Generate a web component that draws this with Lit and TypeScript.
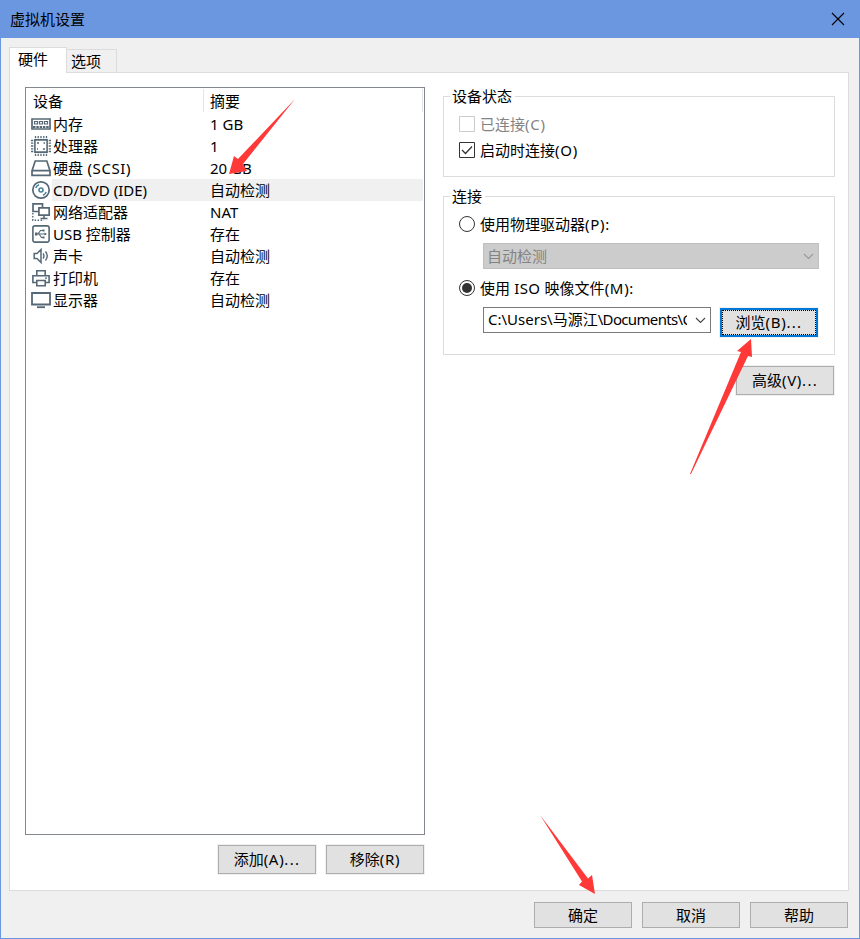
import { LitElement, html, svg, css } from "lit";
import { customElement, property } from "lit/decorators.js";
import { classMap } from "lit/directives/class-map.js";

const icons: Record<string, unknown> = {
  memory: svg`<path d="M2 6h18v10H2z" stroke-width="1.700"/><path d="M4.500 8.500h3v2.500h-3zM9.500 8.500h3v2.500h-3zM14.500 8.500h3v2.500h-3z" stroke-width="1.200"/><path d="M3 14h16" stroke-width="1.800" stroke-dasharray="2.500 .8"/>`,
  cpu: svg`<path d="M4.900 4.900h12.200v12.200H4.900z" stroke-width="1.600"/><path d="M5.500 1v2.300M8.200 1v2.300M11 1v2.300M13.800 1v2.300M16.500 1v2.300M5.500 18.700V21M8.200 18.700V21M11 18.700V21M13.800 18.700V21M16.500 18.700V21M1 5.500h2.300M1 8.200h2.300M1 11h2.300M1 13.800h2.300M1 16.500h2.300M18.700 5.500H21M18.700 8.200H21M18.700 11H21M18.700 13.800H21M18.700 16.500H21" stroke-width="1.300"/><path d="M7 8h2M13 14h2M13.500 8h1.500M7 14h1" stroke-width="1.600"/>`,
  disk: svg`<path d="M2 13.800 5.200 4h11.600L20 13.800v4.500H2zM2 13.700h18" stroke-width="1.700"/>`,
  cd: svg`<circle cx="11" cy="11" r="8.200" stroke-width="1.700"/><circle class="blue" cx="11" cy="11" r="2"/><path class="blue" d="M5.800 9q.8-2.300 3.200-3.200M16.200 13q-.8 2.300-3.200 3.200" stroke-width="1.500"/>`,
  net: svg`<path d="M3 2.900h9.500v7.600H3z" stroke-width="1.700"/><path class="paper" d="M8.900 6.900h10.300v7.300H8.900z" stroke-width="1.700"/><path d="M14 14.500v3M10.500 17.500h7" stroke-width="1.600"/><path d="M2.800 12v7.200h11" stroke-width="1.400" stroke-dasharray="1.500 1.500"/>`,
  usb: svg`<rect x="2.900" y="2.900" width="16.200" height="16.200" rx="2" stroke-width="1.600"/><path d="M6 11h10M8 11l2.500-3.500H13M9 11l2.500 3.500H13" stroke-width="1.200"/><path class="ink" d="M5 9.500h2.500v3H5zM12.500 6.500h2v2h-2zM12.500 13.500h2v2h-2zM14.500 9.500 17 11l-2.500 1.500z"/>`,
  sound: svg`<path d="M4.200 8.500H7l4-4v13l-4-4H4.200z" stroke-width="1.500"/><path d="M13 8.500q2 2.500 0 5M15.500 6.500q3.500 4.500 0 9" stroke-width="1.400"/>`,
  printer: svg`<path d="M6.800 8V3.800h8.400V8M6.500 15.500H2.900V8.800h16.200v6.700h-3.600M6.800 13.500h8.400v5.300H6.800z" stroke-width="1.600"/><path d="M15 11.200h2" stroke-width="1.200"/>`,
  monitor: svg`<path d="M2 4h18v11.500H2z" stroke-width="1.800"/><path d="M7 18.200h8" stroke-width="1.800"/>`,
};

interface Device { icon: string; name: string; note?: string; summary: string; selected?: boolean }

const devices: Device[] = [
  { icon: "memory", name: "内存", summary: "1 GB" },
  { icon: "cpu", name: "处理器", summary: "1" },
  { icon: "disk", name: "硬盘", note: " (SCSI)", summary: "20 GB" },
  { icon: "cd", name: "CD/DVD (IDE)", summary: "自动检测", selected: true },
  { icon: "net", name: "网络适配器", summary: "NAT" },
  { icon: "usb", name: "USB 控制器", summary: "存在" },
  { icon: "sound", name: "声卡", summary: "自动检测" },
  { icon: "printer", name: "打印机", summary: "存在" },
  { icon: "monitor", name: "显示器", summary: "自动检测" },
];

@customElement("device-list")
class DeviceList extends LitElement {
  static styles = css`
    :host { display: block; box-sizing: border-box; width: 400px; height: 748px; border: 1px solid #828790; background: #fff; }
    .head, .row { display: grid; grid-template-columns: 26px 152px 219px; }
    .head { height: 25px; }
    .device { grid-column: 1 / 3; padding-left: 7px; border-right: 1px solid #e5e5e5; }
    .sum { padding-left: 6px; border-right: 1px solid #e5e5e5; }
    .device, .sum { height: 23px; margin: 1px 0; line-height: 24px; }
    .row { height: 22px; line-height: 22px; }
    .name { padding-left: 1px; }
    .note { letter-spacing: .6px; }
    .value { padding-left: 6px; }
    .name, .value { white-space: nowrap; }
    .selected .name, .selected .value { background: #f0f0f0; }
    .icon { width: 22px; height: 22px; margin-left: 4px; fill: none; stroke: #566875; stroke-width: 1.6; }
    .paper { fill: #fff; }
    .blue { stroke: #4a8199; }
    .ink { fill: #566875; stroke: none; }
  `;
  render() {
    return html`
      <div class="head"><div class="device">设备</div><div class="sum">摘要</div></div>
      ${devices.map((d) => html`
        <div class=${classMap({ row: true, selected: !!d.selected })}>
          <svg class="icon" viewBox="0 0 22 22">${icons[d.icon]}</svg>
          <div class="name">${d.name}${d.note ? html`<span class="note">${d.note}</span>` : ""}</div>
          <div class="value">${d.summary}</div>
        </div>`)}
    `;
  }
}

@customElement("push-button")
class PushButton extends LitElement {
  @property({ type: Boolean }) focused = false;
  @property({ type: Boolean }) small = false;
  static styles = css`
    :host { display: block; width: 98px; }
    .btn { box-sizing: border-box; height: 29px; border: 1px solid #adadad; background: #e1e1e1; line-height: 26px; text-align: center; box-shadow: 0 0 0 1px #f0f0f0; white-space: nowrap; }
    .small { height: 26px; line-height: 24px; }
    .focused { border: 2px solid #0078d7; line-height: 24px; outline: 1px dotted #000; outline-offset: -3px; }
  `;
  render() {
    return html`<div class=${classMap({ btn: true, small: this.small, focused: this.focused })}><slot></slot></div>`;
  }
}

@customElement("group-box")
class GroupBox extends LitElement {
  @property() label = "";
  static styles = css`
    :host { display: block; box-sizing: border-box; width: 392px; border: 1px solid #dcdcdc; }
    .legend { display: block; width: max-content; height: 20px; line-height: 20px; margin: -11px 0 0 6px; padding: 0 3px 0 2px; background: #fff; }
  `;
  render() {
    return html`<span class="legend">${this.label}</span><slot></slot>`;
  }
}

@customElement("app-root")
class AppRoot extends LitElement {
  static styles = css`
    :host { display: block; position: relative; box-sizing: border-box; width: 860px; height: 939px; overflow: hidden; background: #f0f0f0; border: 1px solid #6b97e0; border-top: 0; color: #000; font: 15px/22px "Noto Sans", "Noto Sans CJK SC", sans-serif; }
    .title { display: flex; justify-content: space-between; height: 38px; background: #6b97e0; margin: 0 -1px; padding: 0 15px 0 10px; line-height: 39px; }
    .close { width: 14px; height: 14px; margin-top: 12px; stroke: #000; stroke-width: 1.1; }
    .tabs { display: flex; align-items: flex-end; height: 26px; margin: 9px 0 -1px 8px; position: relative; }
    .tab { box-sizing: border-box; border: 1px solid #dcdcdc; border-bottom: 0; }
    .tab.on { width: 58px; height: 26px; padding-left: 8px; background: #fff; line-height: 23px; }
    .tab.off { width: 50px; height: 23px; margin-bottom: 1px; border-left: 0; padding-left: 4px; line-height: 23px; }
    .panel { box-sizing: border-box; display: grid; grid-template-columns: 400px 392px; column-gap: 18px; width: 840px; height: 819px; margin-left: 8px; padding: 14px 0 0 15px; background: #fff; border: 1px solid #dcdcdc; }
    .actions { display: flex; justify-content: flex-end; gap: 10px; margin: 10px 1px 0 0; }
    .right { padding-top: 9px; }
    .state { height: 81px; }
    .conn { height: 159px; margin-top: 19px; }
    .opt { display: flex; align-items: center; gap: 5px; height: 22px; margin-left: 15px; white-space: nowrap; }
    .mark { flex: none; width: 16px; height: 16px; fill: none; stroke: #333; }
    .dot { fill: #333; stroke: none; }
    .off .mark { stroke: #ccc; }
    .opt.off, .combo.off { color: #838383; }
    .key { letter-spacing: .7px; }
    .iso { letter-spacing: .35px; }
    .dots { letter-spacing: 1.3px; }
    .o1 { margin-top: 7px; }
    .o2 { margin-top: 4px; }
    .o3 { margin-top: 7px; }
    .o4 { margin-top: 8px; }
    .combo { box-sizing: border-box; display: flex; align-items: center; justify-content: space-between; height: 26px; padding: 0 4px; border: 1px solid #7a7a7a; line-height: 24px; white-space: nowrap; }
    .combo.off { width: 336px; margin: 8px 0 0 39px; padding-left: 3px; background: #ccc; border-color: #bfbfbf; }
    .path { align-self: flex-start; width: 199px; height: 24px; overflow: hidden; line-height: 23px; }
    .tail { letter-spacing: -.65px; }
    .chev { flex: none; width: 11px; height: 7px; fill: none; stroke: #444; stroke-width: 1.1; }
    .off .chev { stroke: #999; }
    .file { display: flex; align-items: flex-start; gap: 9px; margin: 8px 0 0 39px; }
    .file .combo { width: 228px; }
    .browse { margin-top: 1px; }
    .advanced { margin: 11px 0 0 293px; }
    .foot { display: flex; justify-content: flex-end; gap: 10px; margin: 11px 11px 0 0; }
    .arrows { position: absolute; left: -1px; top: 0; width: 860px; height: 939px; fill: #ff3838; pointer-events: none; }
  `;
  render() {
    const chev = html`<svg class="chev" viewBox="0 0 11 7"><path d="M1 1l4.500 4.500L10 1" /></svg>`;
    return html`
      <div class="title"><span>虚拟机设置</span><svg class="close" viewBox="0 0 14 14"><path d="M1 1l12 12M13 1 1 13" /></svg></div>
      <div class="tabs"><div class="tab on">硬件</div><div class="tab off">选项</div></div>
      <div class="panel">
        <div>
          <device-list></device-list>
          <div class="actions"><push-button>添加<span class="key">(A)</span><span class="dots">...</span></push-button><push-button>移除<span class="key">(R)</span></push-button></div>
        </div>
        <div class="right">
          <group-box class="state" label="设备状态">
            <div class="opt off o1"><svg class="mark" viewBox="0 0 16 16"><path d="M.5.5h15v15H.5z" /></svg><span>已连接<span class="key">(C)</span></span></div>
            <div class="opt o2"><svg class="mark" viewBox="0 0 16 16"><path d="M.5.5h15v15H.5z" /><path d="M3 8l3.500 3.500L13 4.500" stroke-width="1.300" /></svg><span>启动时连接<span class="key">(O)</span></span></div>
          </group-box>
          <group-box class="conn" label="连接">
            <div class="opt o3"><svg class="mark" viewBox="0 0 16 16"><circle cx="8" cy="8" r="7.500" /></svg><span>使用物理驱动器<span class="key">(P):</span></span></div>
            <div class="combo off"><span>自动检测</span>${chev}</div>
            <div class="opt o4"><svg class="mark" viewBox="0 0 16 16"><circle cx="8" cy="8" r="7.500" /><circle class="dot" cx="8" cy="8" r="5" /></svg><span>使用<span class="iso"> ISO </span>映像文件<span class="key">(M):</span></span></div>
            <div class="file">
              <div class="combo"><span class="path">C:\\Users\\马源江<span class="tail">\\Documents\\C</span></span>${chev}</div>
              <push-button class="browse" focused>浏览<span class="key">(B)</span><span class="dots">...</span></push-button>
            </div>
          </group-box>
          <push-button class="advanced">高级<span class="key">(V)</span><span class="dots">...</span></push-button>
        </div>
      </div>
      <div class="foot"><push-button small>确定</push-button><push-button small>取消</push-button><push-button small>帮助</push-button></div>
      <svg class="arrows" viewBox="0 0 860 939">
        <path d="M295 99 243 164 247 171 229 174 234 156 238 159z" />
        <path d="M690 474 741 352 737 351 751 339 752 357 748 356 691 474z" />
        <path d="M540 815 588 878.500 592 875 595 894 579 885 582 881.500z" />
      </svg>
    `;
  }
}
